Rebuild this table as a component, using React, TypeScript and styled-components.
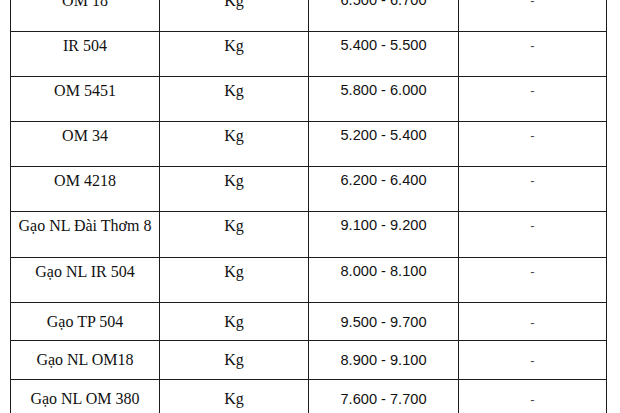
import React from "react";
import styled, { createGlobalStyle } from "styled-components";

const GlobalStyle = createGlobalStyle`
  html, body {
    margin: 0;
    padding: 0;
    background: #ffffff;
  }
  body {
    width: 620px;
    height: 413px;
    overflow: hidden;
  }
`;

type Row = { name: string; unit: string; price: string; change: string; height: number };

const rows: Row[] = [
  { name: "OM 18", unit: "Kg", price: "6.500 - 6.700", change: "-", height: 45 },
  { name: "IR 504", unit: "Kg", price: "5.400 - 5.500", change: "-", height: 45 },
  { name: "OM 5451", unit: "Kg", price: "5.800 - 6.000", change: "-", height: 45 },
  { name: "OM 34", unit: "Kg", price: "5.200 - 5.400", change: "-", height: 45 },
  { name: "OM 4218", unit: "Kg", price: "6.200 - 6.400", change: "-", height: 45 },
  { name: "Gạo NL Đài Thơm 8", unit: "Kg", price: "9.100 - 9.200", change: "-", height: 46 },
  { name: "Gạo NL IR 504", unit: "Kg", price: "8.000 - 8.100", change: "-", height: 45 },
  { name: "Gạo TP 504", unit: "Kg", price: "9.500 - 9.700", change: "-", height: 38 },
  { name: "Gạo NL OM18", unit: "Kg", price: "8.900 - 9.100", change: "-", height: 39 },
  { name: "Gạo NL OM 380", unit: "Kg", price: "7.600 - 7.700", change: "-", height: 39 },
];

const Page = styled.div`
  padding-left: 10px;
  margin-top: -14px;
`;

const Table = styled.table`
  border-collapse: collapse;
  table-layout: fixed;
  width: 597px;
`;

const Cell = styled.td<{ $height: number; $sans?: boolean; $width: number }>`
  width: ${(p) => p.$width}px;
  height: ${(p) => p.$height}px;
  box-sizing: border-box;
  padding: ${(p) => (p.$height > 40 ? "5px 0 0" : "0")};
  vertical-align: ${(p) => (p.$height > 40 ? "top" : "middle")};
  border: 1px solid #1c1c1c;
  text-align: center;
  white-space: nowrap;
  color: #111;
  font-family: ${(p) =>
    p.$sans ? '"Liberation Sans", Arial, sans-serif' : '"Liberation Serif", "Times New Roman", serif'};
  font-size: ${(p) => (p.$sans ? "14.6px" : "16px")};
`;

const Dash = styled.span`
  color: #444;
  font-size: 13px;
`;

export default function App() {
  return (
    <>
      <GlobalStyle />
      <Page>
        <Table>
          <tbody>
            {rows.map((r) => (
              <tr key={r.name}>
                <Cell $height={r.height} $width={149}>{r.name}</Cell>
                <Cell $height={r.height} $width={149}>{r.unit}</Cell>
                <Cell $height={r.height} $width={150} $sans>{r.price}</Cell>
                <Cell $height={r.height} $width={148} $sans>
                  <Dash>{r.change}</Dash>
                </Cell>
              </tr>
            ))}
          </tbody>
        </Table>
      </Page>
    </>
  );
}
